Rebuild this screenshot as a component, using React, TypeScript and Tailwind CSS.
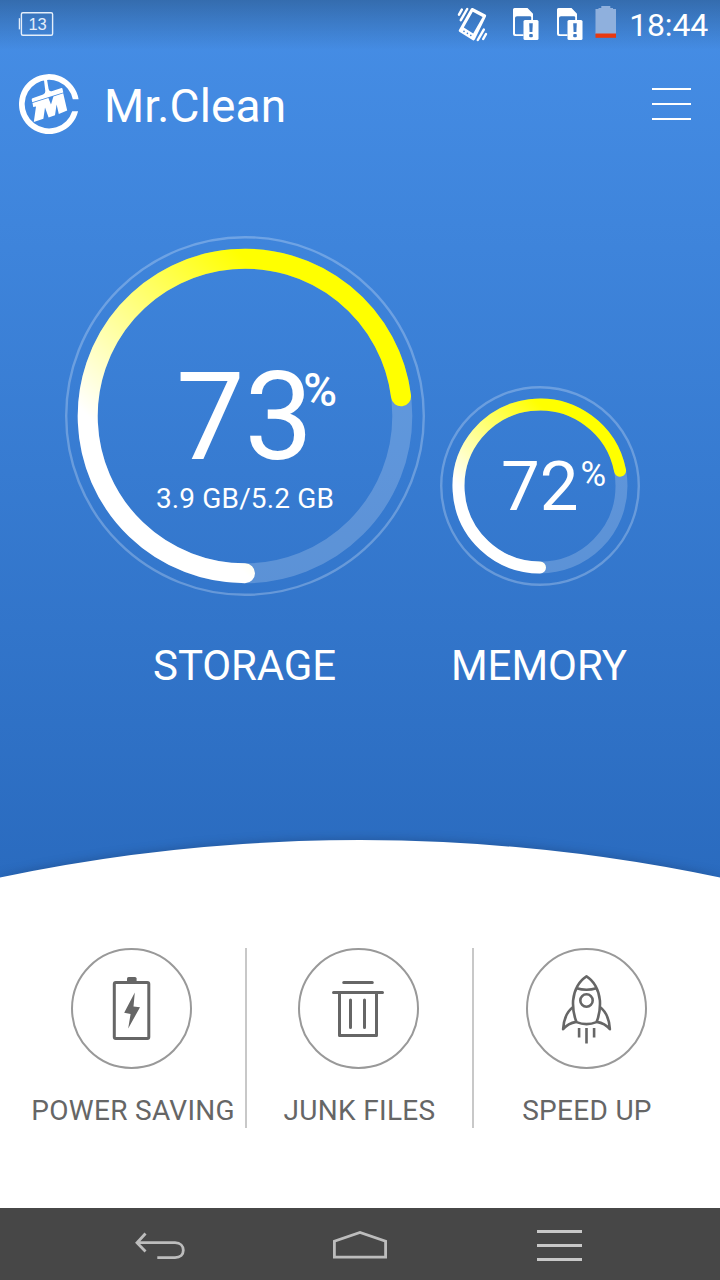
import React from "react";

type GaugeProps = {
  size: number;
  radius: number;
  thickness: number;
  percent: number;
  id: string;
};

function Gauge({ size, radius, thickness, percent, id }: GaugeProps) {
  const c = size / 2;
  const a = (percent / 100) * 2 * Math.PI;
  const x = c - radius * Math.sin(a);
  const y = c + radius * Math.cos(a);
  return (
    <svg width={size} height={size} className="col-start-1 row-start-1 block">
      <defs>
        <linearGradient id={id} gradientUnits="userSpaceOnUse" x1={c - radius} y1={c} x2={c} y2={c - radius}>
          <stop offset="0" stopColor="#ffffff" />
          <stop offset="1" stopColor="#ffff00" />
        </linearGradient>
      </defs>
      <circle cx={c} cy={c} r={c - 1.2} fill="none" stroke="#ffffff" strokeOpacity="0.25" strokeWidth="2.4" />
      <circle cx={c} cy={c} r={radius} fill="none" stroke="#ffffff" strokeOpacity="0.2" strokeWidth={thickness} />
      <path
        d={`M${c} ${c + radius} A${radius} ${radius} 0 1 1 ${x} ${y}`}
        fill="none"
        stroke={`url(#${id})`}
        strokeWidth={thickness}
        strokeLinecap="round"
      />
    </svg>
  );
}

function VibrateIcon() {
  return (
    <svg width="32" height="36" viewBox="0 0 32 36" className="block">
      <path
        fill="#fff"
        fillRule="evenodd"
        d="M15 1.5 Q15.7 .6 16.8 1.1 L29.4 7.6 Q30.6 8.3 30 9.4 L18.8 32.6 Q18.1 33.8 16.9 33.2 L3.3 24.8 Q2.3 24 2.9 22.9 Z M16.8 4.8 L7.8 20.6 L17.2 26.4 L26.6 10 Z"
      />
      <g fill="#3f81d2">
        <circle cx="8" cy="24.4" r=".8" />
        <circle cx="11.4" cy="26.4" r=".8" />
        <circle cx="14.8" cy="28.4" r=".8" />
      </g>
      <path
        d="M5.8 2.6 L3 7.6 M11.2 2 L4.8 13.2 M30 27 L27.2 32 M27.8 22.6 L21.8 33"
        stroke="#fff"
        strokeWidth="2.5"
        strokeLinecap="round"
      />
    </svg>
  );
}

function SimAlertIcon() {
  return (
    <svg width="26" height="34" viewBox="0 0 26 34" className="block">
      <path
        fill="#fff"
        fillRule="evenodd"
        d="M1.5 1 H14.5 L20 6.8 V13 H18.2 V10.2 Q18 9.3 17 9.3 H4 Q2 9.3 2 11 V26.5 Q2 27.3 3 27.3 H10.5 V29 H2 Q0 29 0 27 V2.5 Q0 1 1.5 1 Z"
      />
      <rect x="10.5" y="13" width="15" height="20" rx="1.5" fill="#fff" />
      <path d="M16.2 16.2 H19.8 L19.4 25 H16.6 Z" fill="#3c78c3" />
      <rect x="16.2" y="27" width="3.6" height="3.2" rx="1" fill="#3c78c3" />
    </svg>
  );
}

function BatteryIcon() {
  return (
    <svg width="22" height="34" viewBox="0 0 22 34" className="block">
      <path d="M6.3 1 H15.3 V3 H18 V4 H21 V29 H.5 V4 H3.5 V3 H6.3 Z" fill="#8fb0dd" />
      <rect x=".5" y="28.5" width="20.5" height="4.3" fill="#e9380f" />
    </svg>
  );
}

function NotificationIcon() {
  return (
    <svg width="36" height="26" viewBox="0 0 36 26" className="block">
      <rect x="3.4" y="1.8" width="31.2" height="22.4" rx="1.5" fill="none" stroke="#e4eefa" strokeWidth="1.4" />
      <path d="M1.4 7.2 V18.4" stroke="#e4eefa" strokeWidth="1.3" />
      <text x="19.6" y="19.4" textAnchor="middle" fill="#e4eefa" fontSize="16.5" fontFamily="Liberation Sans, sans-serif">
        13
      </text>
    </svg>
  );
}

function Logo() {
  return (
    <svg width="60" height="60" viewBox="0 0 60 60" className="block" fill="#fff">
      <path d="M59.6 25.3 A30 30 0 1 0 59.1 37.3 H53.2 A24.3 24.3 0 1 1 53.8 25.3 Z" />
      <path d="M24.9 5.4 H28 L29.6 15 Q30.2 17.8 32.6 17.2 L42.5 14 Q43.3 13.8 43.5 14.7 L44.3 18.4 L13.2 28.3 L12.7 25.4 Q12.6 24.5 13.5 24.2 L24.1 20.4 Q26.6 19.5 26.3 17 Z" />
      <path d="M13.5 29 L29.4 24 L32 30.4 L34.4 22.5 L44.2 19.3 L48.2 36.6 L39.8 40 L37.6 30.6 L36 41.2 L29.6 43.4 L26 33.4 L24.4 44.8 L14.8 48 L17 32.4 L14.2 33 Z" />
    </svg>
  );
}

function PowerIcon() {
  return (
    <svg width="121" height="121" viewBox="0 0 121 121" className="block">
      <circle cx="60.5" cy="60.5" r="59.5" fill="none" stroke="#999" strokeWidth="2" />
      <rect x="43.3" y="34.5" width="34.5" height="56" rx="1.5" fill="none" stroke="#666" strokeWidth="3" />
      <path d="M56 34 V30.6 Q56 29 57.6 29 H64 Q65.6 29 65.6 30.6 V34 Z" fill="#666" />
      <path d="M63.8 44.4 L53.2 64.8 L59.6 66 L57.2 80.4 L69 59.3 L62.5 58.6 Z" fill="#666" />
    </svg>
  );
}

function TrashIcon() {
  return (
    <svg width="121" height="121" viewBox="0 0 121 121" className="block">
      <circle cx="60.5" cy="60.5" r="59.5" fill="none" stroke="#999" strokeWidth="2" />
      <path
        d="M45.7 34.5 H74.3 M35.5 44.5 H84.5 M41.5 45.5 V87.5 H78.5 V45.5 M52.5 52.1 V79.5 M66.5 52.1 V79.5"
        fill="none"
        stroke="#666"
        strokeWidth="3"
        strokeLinecap="round"
        strokeLinejoin="round"
      />
    </svg>
  );
}

function RocketIcon() {
  return (
    <svg width="121" height="121" viewBox="0.5 0.5 121 121" className="block">
      <circle cx="61" cy="61" r="59.5" fill="none" stroke="#999" strokeWidth="2" />
      <g fill="none" stroke="#666" strokeWidth="2.6" strokeLinejoin="round">
        <path d="M61 28.8 C54 33 48.6 42 47.6 53 C47.2 60 48.5 68.5 51 74.6 Q61 78.6 71 74.6 C73.6 68.5 74.8 60 74.4 53 C73.4 42 68 33 61 28.8 Z" />
        <path d="M51 40.8 Q61 43.8 71 40.8" />
        <circle cx="61" cy="53" r="6.2" />
        <path d="M47.6 59.5 C41.5 64 38.2 71 37.6 81.8 C41 77.6 45 75.3 50.6 74.4 M74.4 59.5 C80.5 64 83.8 71 84.4 81.8 C81 77.6 77 75.3 71.4 74.4" />
      </g>
      <path d="M53.6 80.5 V90 M61 80.5 V96 M68.6 80.5 V90" stroke="#666" strokeWidth="2.6" />
    </svg>
  );
}

export default function App() {
  return (
    <div className="flex h-[1280px] w-[720px] flex-col overflow-hidden bg-white font-['Roboto',sans-serif] text-white">
      <div className="flex h-[880px] shrink-0 flex-col bg-linear-to-b from-[#468ee6] to-[#2a6bbf]">
        <div className="flex h-[50px] shrink-0 items-start justify-between bg-linear-to-b from-[#2b5a90]/65 to-transparent pt-[7px] pr-[12px] pl-[18px]">
          <div className="pt-[4px]">
            <NotificationIcon />
          </div>
          <div className="flex">
            <VibrateIcon />
            <div className="ml-[25px] flex gap-[18px]">
              <SimAlertIcon />
              <SimAlertIcon />
            </div>
            <div className="-mt-[2px] ml-[12px]">
              <BatteryIcon />
            </div>
            <span className="ml-[12px] text-[32px] leading-[36px] tracking-[-0.2px]">18:44</span>
          </div>
        </div>

        <header className="flex h-[108px] shrink-0 items-center justify-between pr-[29px] pl-[19px]">
          <div className="flex items-center gap-[25px]">
            <Logo />
            <h1 className="pt-[4px] text-[46px] leading-[56px] tracking-[0.15px]">Mr.Clean</h1>
          </div>
          <div className="flex w-[39px] flex-col gap-[13px]">
            <div className="h-[2px] bg-white" />
            <div className="h-[2px] bg-white" />
            <div className="h-[2px] bg-white" />
          </div>
        </header>

        <main className="flex flex-1 pt-[78px] pl-[65px]">
          <section className="flex w-[360px] flex-col items-center">
            <div className="grid">
              <Gauge size={360} radius={157.3} thickness={20} percent={73} id="storage-arc" />
              <div className="col-start-1 row-start-1 pt-[122px]">
                <div className="flex h-[120px] pl-[111px]">
                  <span className="text-[122px] leading-[120px]">73</span>
                  <span className="-ml-[10px] pt-[4px] text-[46px] leading-[56px] font-medium">%</span>
                </div>
                <p className="pt-[5px] text-center text-[28px] leading-[32px] tracking-[0.15px]">3.9 GB/5.2 GB</p>
              </div>
            </div>
            <h2 className="pt-[44px] pr-[1px] text-[42px] leading-[52px] tracking-[-0.15px]">STORAGE</h2>
          </section>
          <section className="ml-[15px] flex w-[200px] flex-col items-center pt-[150px]">
            <div className="grid">
              <Gauge size={200} radius={81.5} thickness={12} percent={72} id="memory-arc" />
              <div className="col-start-1 row-start-1 flex pt-[65px] pl-[61px]">
                <span className="text-[69px] leading-[72px]">72</span>
                <span className="ml-[2px] pt-[4px] text-[35px] leading-[40px]">%</span>
              </div>
            </div>
            <h2 className="pt-[54px] pr-[2px] text-[42px] leading-[52px]">MEMORY</h2>
          </section>
        </main>

        <svg width="720" height="50" viewBox="0 0 720 50" className="block shrink-0">
          <path d="M0 47.5 A1749 1749 0 0 1 720 47.5 V50 H0 Z" fill="#fff" className="drop-shadow-[0_-1px_5px_rgba(20,50,90,0.35)]" />
        </svg>
      </div>

      <div className="flex flex-1 items-start pt-[68px] text-[28px] leading-[32px] tracking-[0.3px] whitespace-nowrap text-[#666]">
        <div className="flex h-[180px] w-[247px] flex-col items-end border-r-2 border-[#c8c8c8]">
          <div className="pr-[53px]">
            <PowerIcon />
          </div>
          <span className="pt-[26px] pr-[10px]">POWER SAVING</span>
        </div>
        <div className="flex h-[180px] w-[227px] flex-col items-center border-r-2 border-[#c8c8c8]">
          <div className="pr-[2px]">
            <TrashIcon />
          </div>
          <span className="pt-[26px]">JUNK FILES</span>
        </div>
        <div className="flex h-[180px] w-[226px] flex-col items-center">
          <div className="pr-[1px]">
            <RocketIcon />
          </div>
          <span className="pt-[26px]">SPEED UP</span>
        </div>
      </div>

      <nav className="flex h-[72px] shrink-0 items-center justify-between bg-[#474747] pr-[138px] pl-[134px]">
        <svg width="52" height="30" viewBox="0 0 52 30" className="block" fill="none" stroke="#bdbdbd" strokeWidth="2.8">
          <path d="M11.5 4.5 L3 13.7 L11.5 22.5 M3.5 13.7 H41 C46.4 13.7 49.3 17.2 49.3 21.3 C49.3 25.5 46.4 28.6 41 28.6 H23.3" />
        </svg>
        <svg width="58" height="30" viewBox="0 0 58 30" className="block" fill="none" stroke="#bdbdbd" strokeWidth="2.8">
          <path d="M1.4 28.2 V12.3 L27 3.5 L52.6 12.3 V28.2 Z" />
        </svg>
        <div className="flex w-[45px] flex-col gap-[11px] pt-[2px]">
          <div className="h-[3px] bg-[#c8c8c8]" />
          <div className="h-[3px] bg-[#c8c8c8]" />
          <div className="h-[3px] bg-[#c8c8c8]" />
        </div>
      </nav>
    </div>
  );
}
